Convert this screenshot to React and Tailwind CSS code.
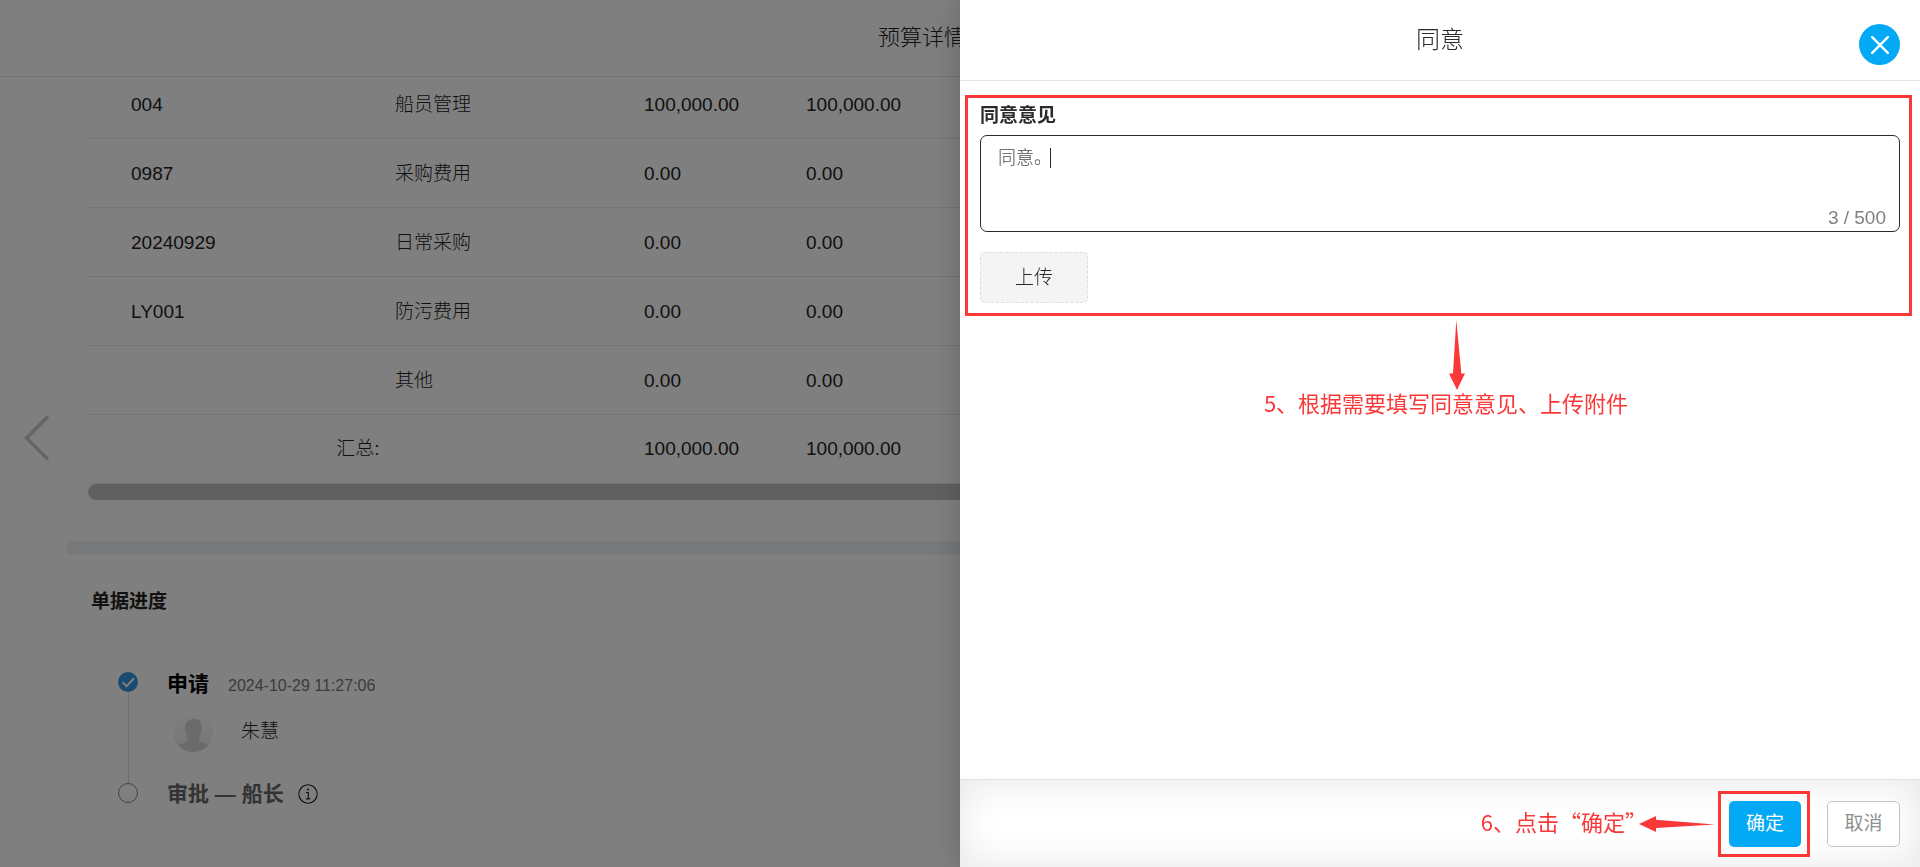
import React, { useState } from "react";

const budgetRows = [
  { code: "004", name: "船员管理", amount: "100,000.00", balance: "100,000.00" },
  { code: "0987", name: "采购费用", amount: "0.00", balance: "0.00" },
  { code: "20240929", name: "日常采购", amount: "0.00", balance: "0.00" },
  { code: "LY001", name: "防污费用", amount: "0.00", balance: "0.00" },
  { code: "", name: "其他", amount: "0.00", balance: "0.00" },
];

const BudgetTable = () => (
  <table className="-mt-2 w-full table-fixed border-collapse text-left text-[19px] font-light">
    <colgroup>
      <col className="w-[264px]" />
      <col className="w-[276px]" />
      <col className="w-[162px]" />
      <col />
    </colgroup>
    <tbody>
      {budgetRows.map((row) => (
        <tr key={row.name} className="h-[69px] border-b border-[#e8e8e8]">
          <td className="pt-1 pl-[43px]">{row.code}</td>
          <td className="pt-1 pl-[43px]">{row.name}</td>
          <td className="pt-1 pl-4">{row.amount}</td>
          <td className="pt-1 pl-4">{row.balance}</td>
        </tr>
      ))}
      <tr className="h-[69px] border-b border-[#e8e8e8]">
        <td colSpan={2} className="pt-0.5 text-center">汇总:</td>
        <td className="pt-0.5 pl-4">100,000.00</td>
        <td className="pt-0.5 pl-4">100,000.00</td>
      </tr>
    </tbody>
  </table>
);

const Avatar = () => (
  <svg viewBox="0 0 40 40" className="h-10 w-10">
    <defs>
      <clipPath id="avatar-clip">
        <circle cx="20" cy="20" r="20" />
      </clipPath>
      <linearGradient id="avatar-bg" x1="0" y1="0" x2="0" y2="1">
        <stop offset="0" stopColor="#ffffff" />
        <stop offset="1" stopColor="#eaeaea" />
      </linearGradient>
    </defs>
    <g clipPath="url(#avatar-clip)">
      <rect width="40" height="40" fill="url(#avatar-bg)" />
      <path
        d="M21 7c5 0 8 3 8 8 0 5-2 8-3 11-.5 3 1 4 4 5 4 1 7 2 9 4v5H2v-5c3-2 6-3 9-4 3-1 4-2 4-5-1-3-3-6-3-11 0-5 4-8 9-8z"
        fill="#d6d6d6"
      />
    </g>
  </svg>
);

const Progress = () => (
  <div className="mt-[52px] pl-[30px]">
    <div className="flex h-[110px] gap-[29px]">
      <div className="-mb-[5px] flex w-5 flex-col items-center pt-1">
        <svg viewBox="0 0 20 20" className="h-5 w-5 shrink-0">
          <circle cx="10" cy="10" r="10" fill="#3296e0" />
          <path d="M4.5 10.2l4 4 7.5-8" fill="none" stroke="#fff" strokeWidth="2" />
        </svg>
        <div className="w-px grow bg-[#d8d8d8]"></div>
      </div>
      <div>
        <div className="flex items-center gap-[19px]">
          <h3 className="text-[21px] leading-8 font-bold text-black">申请</h3>
          <span className="pt-1 text-base leading-6 text-[#777]">2024-10-29 11:27:06</span>
        </div>
        <div className="mt-3 flex items-center gap-7 pl-1.5">
          <Avatar />
          <span className="text-[19px] leading-7 font-light">朱慧</span>
        </div>
      </div>
    </div>
    <div className="flex gap-[29px]">
      <div className="w-5 pt-[5px]">
        <div className="h-5 w-5 rounded-full border border-[#888]"></div>
      </div>
      <div className="flex items-center gap-3.5">
        <h3 className="text-[21px] leading-8 font-bold text-[#666]">审批 — 船长</h3>
        <svg viewBox="0 0 20 20" className="h-5 w-5" fill="none" stroke="#222">
          <circle cx="10" cy="10" r="9.2" strokeWidth="1.1" />
          <path d="M8 8.5h2.3v6M7.8 14.8h4.6" strokeWidth="1.2" />
          <circle cx="10" cy="5.5" r="1.1" fill="#222" stroke="none" />
        </svg>
      </div>
    </div>
  </div>
);

const BudgetPage = () => (
  <div className="flex h-full flex-col text-[#222]">
    <header className="h-[77px] shrink-0 border-b border-[#e8e8e8]">
      <h1 className="mx-auto w-[164px] pt-[22px] text-[22px] leading-8 font-light">预算详情</h1>
    </header>
    <div className="flex min-h-0 grow overflow-hidden">
      <div className="w-[67px] shrink-0 pt-[337px] pl-[23px]">
        <button type="button" aria-label="上一条" className="block">
          <svg viewBox="0 0 28 48" className="h-12 w-7" fill="none" stroke="#c8c8c8" strokeWidth="3.4">
            <path d="M25 2.5L3.5 24 25 45.5" />
          </svg>
        </button>
      </div>
      <main className="grow">
        <div className="pl-[21px]">
          <BudgetTable />
          <div className="h-4 rounded-l-full bg-[#c1c1c1]"></div>
        </div>
        <div className="mt-[41px] h-[13px] bg-[#edf0f5]"></div>
        <section className="pt-[34px] pl-[21px]">
          <h2 className="pl-[3px] text-[19px] leading-7 font-bold">单据进度</h2>
          <Progress />
        </section>
      </main>
    </div>
  </div>
);

const ApproveDrawer = () => {
  const [opinion, setOpinion] = useState("同意。");

  return (
    <aside className="fixed inset-y-0 right-0 flex w-1/2 flex-col bg-white text-[#2a2a2a] shadow-[0_0_30px_rgba(0,0,0,0.2)]">
      <header className="relative flex h-[81px] shrink-0 items-center justify-center border-b border-[#e4e4e4]">
        <h2 className="text-2xl font-light">同意</h2>
        <button
          type="button"
          aria-label="关闭"
          className="absolute top-6 right-5 flex h-[41px] w-[41px] items-center justify-center rounded-full bg-[#03a9f4]"
        >
          <svg viewBox="0 0 18 18" className="h-[18px] w-[18px]" stroke="#fff" strokeWidth="2.4" strokeLinecap="round">
            <path d="M1.2 1.2l15.6 15.6M16.8 1.2L1.2 16.8" />
          </svg>
        </button>
      </header>

      <div className="grow">
        <section className="mt-3.5 mr-2 ml-[5px] border-[3px] border-[#fa3838] pt-0.5 pr-[9px] pb-[10px] pl-3">
          <label htmlFor="opinion" className="block text-[19px] leading-8 font-bold">
            同意意见
          </label>
          <div className="relative mt-[3px]">
            <textarea
              id="opinion"
              value={opinion}
              maxLength={500}
              onChange={(e) => setOpinion(e.target.value)}
              className="block h-[97px] w-full resize-none rounded-[7px] border border-[#2a2a2a] px-[17px] py-2 text-lg leading-7 font-light text-[#4a4a4a] caret-transparent outline-none"
            />
            <span className="absolute top-[13px] left-[70px] h-5 w-px bg-[#2a2a2a]"></span>
            <span className="absolute right-3.5 bottom-0.5 text-[19px] leading-6 text-[#808080]">
              {opinion.length} / 500
            </span>
          </div>
          <button
            type="button"
            className="mt-5 block h-[51px] w-[108px] rounded-[5px] border border-dashed border-[#dedede] bg-[#f4f4f4] pt-0.5 text-[19px] font-light"
          >
            上传
          </button>
        </section>

        <div className="flex flex-col items-center pt-1">
          <svg viewBox="0 0 16 70" className="mr-[-33px] h-[70px] w-4" fill="#fa3838">
            <path d="M7.3 0L12.3 53.5H16L8 70 0 53.5h4z" />
          </svg>
          <p className="ml-3 font-['Noto_Sans_CJK_SC',sans-serif] text-[22px] leading-6 text-[#fa3838]">
            5、根据需要填写同意意见、上传附件
          </p>
        </div>
      </div>

      <footer className="flex h-[88px] shrink-0 items-center justify-end border-t border-[#e0e0e0] pr-5 shadow-[inset_0_0_40px_rgba(0,0,0,0.1)]">
        <p className="-mr-2 pb-1.5 font-['Noto_Sans_CJK_SC',sans-serif] text-[22px] leading-6 text-[#fa3838]">
          6、点击“确定”
        </p>
        <svg viewBox="0 0 76 16" className="mr-[3px] h-4 w-[76px]" fill="#fa3838">
          <path d="M0 8L17 0v3.8L76 8.6 17 12v4z" />
        </svg>
        <div className="mr-[17px] border-[3px] border-[#fa3838] py-[7px] pr-1.5 pl-2">
          <button
            type="button"
            className="block h-[46px] w-[72px] rounded-[5px] bg-[#03a9f4] pt-0.5 text-[19px] text-white"
          >
            确定
          </button>
        </div>
        <button
          type="button"
          className="h-[46px] w-[73px] rounded-[5px] border border-[#c4c4c4] bg-white pt-0.5 text-[19px] text-[#909090]"
        >
          取消
        </button>
      </footer>
    </aside>
  );
};

export default function App() {
  return (
    <div
      lang="zh-CN"
      className="h-screen overflow-hidden bg-white font-['Liberation_Sans','Noto_Sans_CJK_SC',sans-serif]"
    >
      <BudgetPage />
      <div className="fixed inset-0 bg-black/50"></div>
      <ApproveDrawer />
    </div>
  );
}
